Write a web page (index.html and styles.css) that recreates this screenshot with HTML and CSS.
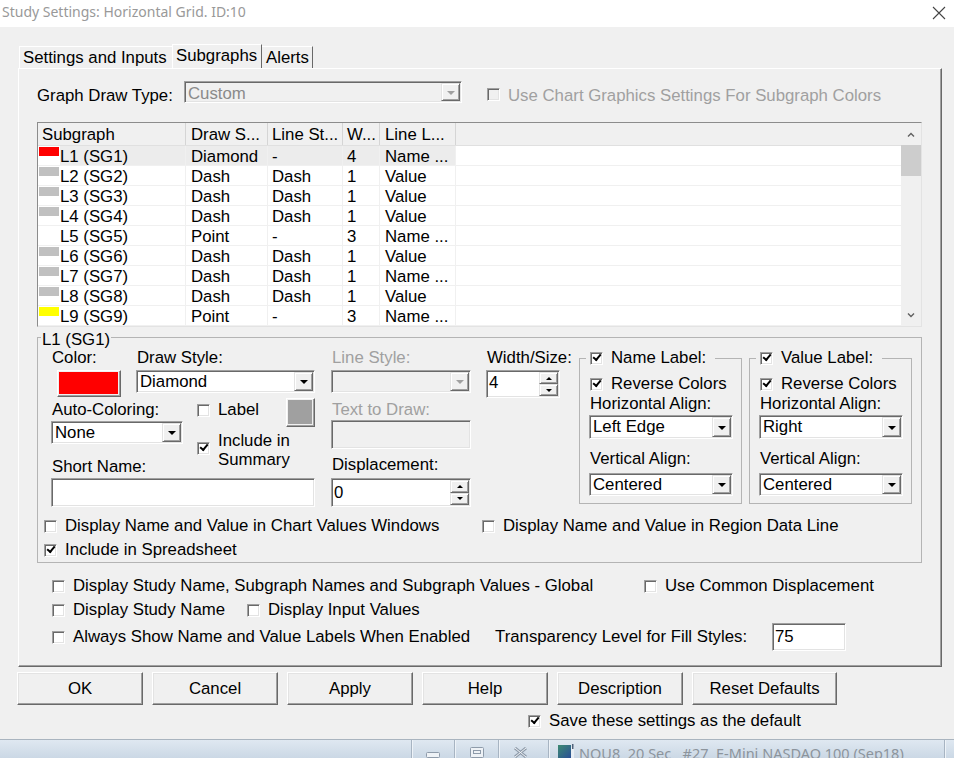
FILE: index.html
```html
<!DOCTYPE html>
<html lang="en">
<head>
  <meta charset="UTF-8">
  <title>Study Settings: Horizontal Grid. ID:10</title>
  <link rel="stylesheet" href="styles.css">
</head>
<body>
  <div class="titlebar">
    <span class="title">Study Settings: Horizontal Grid. ID:10</span>
    <svg class="close-x" width="14" height="14" viewBox="0 0 14 14"><path d="M1 1L13 13M13 1L1 13" stroke="#444" stroke-width="1.1" fill="none"/></svg>
  </div>

  <div class="dialog">
    <div class="tabs">
      <div class="tab tab-first">Settings and Inputs</div>
      <div class="tab tab-active">Subgraphs</div>
      <div class="tab tab-last">Alerts</div>
    </div>

    <div class="panel">
      <div class="draw-type">
        <span class="draw-type-label">Graph Draw Type:</span>
        <div class="combo combo-dis draw-type-combo"><span class="combo-val">Custom</span><span class="combo-btn"></span></div>
        <span class="chk chk-dis chart-colors-chk"></span>
        <span class="opt-text dis-text chart-colors-text">Use Chart Graphics Settings For Subgraph Colors</span>
      </div>

      <div class="list">
        <div class="list-main">
          <div class="list-head">
            <div class="c c1 h1">Subgraph</div>
            <div class="c c2">Draw S...</div>
            <div class="c c3">Line St...</div>
            <div class="c c4">W...</div>
            <div class="c c5">Line L...</div>
            <div class="c-fill"></div>
          </div>
          <div class="list-row sel">
            <div class="c c1"><span class="sw sw-red"></span><span class="nm">L1 (SG1)</span></div>
            <div class="c c2">Diamond</div><div class="c c3">-</div><div class="c c4">4</div><div class="c c5">Name ...</div><div class="c-fill"></div>
          </div>
          <div class="list-row">
            <div class="c c1"><span class="sw sw-grey"></span><span class="nm">L2 (SG2)</span></div>
            <div class="c c2">Dash</div><div class="c c3">Dash</div><div class="c c4">1</div><div class="c c5">Value</div><div class="c-fill"></div>
          </div>
          <div class="list-row">
            <div class="c c1"><span class="sw sw-grey"></span><span class="nm">L3 (SG3)</span></div>
            <div class="c c2">Dash</div><div class="c c3">Dash</div><div class="c c4">1</div><div class="c c5">Value</div><div class="c-fill"></div>
          </div>
          <div class="list-row">
            <div class="c c1"><span class="sw sw-grey"></span><span class="nm">L4 (SG4)</span></div>
            <div class="c c2">Dash</div><div class="c c3">Dash</div><div class="c c4">1</div><div class="c c5">Value</div><div class="c-fill"></div>
          </div>
          <div class="list-row">
            <div class="c c1"><span class="sw"></span><span class="nm">L5 (SG5)</span></div>
            <div class="c c2">Point</div><div class="c c3">-</div><div class="c c4">3</div><div class="c c5">Name ...</div><div class="c-fill"></div>
          </div>
          <div class="list-row">
            <div class="c c1"><span class="sw sw-grey"></span><span class="nm">L6 (SG6)</span></div>
            <div class="c c2">Dash</div><div class="c c3">Dash</div><div class="c c4">1</div><div class="c c5">Value</div><div class="c-fill"></div>
          </div>
          <div class="list-row">
            <div class="c c1"><span class="sw sw-grey"></span><span class="nm">L7 (SG7)</span></div>
            <div class="c c2">Dash</div><div class="c c3">Dash</div><div class="c c4">1</div><div class="c c5">Name ...</div><div class="c-fill"></div>
          </div>
          <div class="list-row">
            <div class="c c1"><span class="sw sw-grey"></span><span class="nm">L8 (SG8)</span></div>
            <div class="c c2">Dash</div><div class="c c3">Dash</div><div class="c c4">1</div><div class="c c5">Value</div><div class="c-fill"></div>
          </div>
          <div class="list-row">
            <div class="c c1"><span class="sw sw-yellow"></span><span class="nm">L9 (SG9)</span></div>
            <div class="c c2">Point</div><div class="c c3">-</div><div class="c c4">3</div><div class="c c5">Name ...</div><div class="c-fill"></div>
          </div>
        </div>
        <div class="vscroll">
          <div class="sb-arrow"><svg width="8" height="5" viewBox="0 0 8 5"><path d="M1 4.5L4 1.5L7 4.5" fill="none" stroke="#606060" stroke-width="1.4"/></svg></div>
          <div class="sb-thumb"></div>
          <div class="sb-track"></div>
          <div class="sb-arrow"><svg width="8" height="5" viewBox="0 0 8 5"><path d="M1 0.5L4 3.5L7 0.5" fill="none" stroke="#606060" stroke-width="1.4"/></svg></div>
        </div>
      </div>

      <fieldset class="group sg-group">
        <legend class="sg-legend">L1 (SG1)</legend>
        <div class="sg-main">
          <div class="col-l">
            <div class="row-a">
              <div class="color-block">
                <div class="lbl">Color:</div>
                <div class="swatch-btn color-btn"><span class="swatch-face face-red"></span></div>
              </div>
              <div class="ds-block">
                <div class="lbl">Draw Style:</div>
                <div class="combo ds-combo"><span class="combo-val">Diamond</span><span class="combo-btn"></span></div>
              </div>
            </div>
            <div class="row-b">
              <div class="ac-col">
                <div class="lbl ac-label">Auto-Coloring:</div>
                <div class="combo ac-combo"><span class="combo-val">None</span><span class="combo-btn"></span></div>
                <div class="lbl short-label">Short Name:</div>
              </div>
              <div class="lbl-col">
                <div class="label-row">
                  <span class="chk label-chk"></span>
                  <span class="opt-text label-text">Label</span>
                  <span class="swatch-btn grey-btn"><span class="swatch-face face-grey"></span></span>
                </div>
                <div class="inc-row">
                  <span class="chk on inc-chk"></span>
                  <span class="opt-text two-line">Include in<br>Summary</span>
                </div>
              </div>
            </div>
            <div class="edit short-edit"></div>
          </div>

          <div class="col-m">
            <div class="lbl dis-text">Line Style:</div>
            <div class="combo combo-dis ls-combo"><span class="combo-val"></span><span class="combo-btn"></span></div>
            <div class="lbl dis-text ttd-label">Text to Draw:</div>
            <div class="edit edit-dis ttd-edit"></div>
            <div class="lbl disp-label">Displacement:</div>
            <div class="spin disp-spin"><span class="spin-val">0</span><span class="spin-btns"><span class="spin-b spin-up"></span><span class="spin-b spin-dn"></span></span></div>
          </div>

          <div class="col-w">
            <div class="lbl">Width/Size:</div>
            <div class="spin w-spin"><span class="spin-val">4</span><span class="spin-btns"><span class="spin-b spin-up"></span><span class="spin-b spin-dn"></span></span></div>
          </div>

          <fieldset class="group lbl-group">
            <legend class="lbl-legend"><span class="opt"><span class="chk on"></span><span class="opt-text">Name Label:</span></span></legend>
            <div class="opt"><span class="chk on rc-chk"></span><span class="opt-text">Reverse Colors</span></div>
            <div class="lbl ha-label">Horizontal Align:</div>
            <div class="combo ha-combo"><span class="combo-val">Left Edge</span><span class="combo-btn"></span></div>
            <div class="lbl va-label">Vertical Align:</div>
            <div class="combo va-combo"><span class="combo-val">Centered</span><span class="combo-btn"></span></div>
          </fieldset>

          <fieldset class="group lbl-group val-group">
            <legend class="lbl-legend"><span class="opt"><span class="chk on"></span><span class="opt-text">Value Label:</span></span></legend>
            <div class="opt"><span class="chk on rc-chk"></span><span class="opt-text">Reverse Colors</span></div>
            <div class="lbl ha-label">Horizontal Align:</div>
            <div class="combo ha-combo"><span class="combo-val">Right</span><span class="combo-btn"></span></div>
            <div class="lbl va-label">Vertical Align:</div>
            <div class="combo va-combo"><span class="combo-val">Centered</span><span class="combo-btn"></span></div>
          </fieldset>
        </div>

        <div class="sg-checks">
          <div class="check-row">
            <div class="opt cv-opt"><span class="chk"></span><span class="opt-text">Display Name and Value in Chart Values Windows</span></div>
            <div class="opt"><span class="chk"></span><span class="opt-text">Display Name and Value in Region Data Line</span></div>
          </div>
          <div class="check-row second">
            <div class="opt"><span class="chk on"></span><span class="opt-text">Include in Spreadsheet</span></div>
          </div>
        </div>
      </fieldset>

      <div class="global">
        <div class="check-row">
          <div class="opt g1"><span class="chk"></span><span class="opt-text">Display Study Name, Subgraph Names and Subgraph Values - Global</span></div>
          <div class="opt"><span class="chk"></span><span class="opt-text">Use Common Displacement</span></div>
        </div>
        <div class="check-row second">
          <div class="opt g2"><span class="chk"></span><span class="opt-text">Display Study Name</span></div>
          <div class="opt"><span class="chk"></span><span class="opt-text">Display Input Values</span></div>
        </div>
        <div class="check-row third">
          <div class="opt g3"><span class="chk"></span><span class="opt-text">Always Show Name and Value Labels When Enabled</span></div>
          <span class="tr-label">Transparency Level for Fill Styles:</span>
          <div class="edit tr-edit">75</div>
        </div>
      </div>
    </div>

    <div class="buttons">
      <div class="btn">OK</div>
      <div class="btn">Cancel</div>
      <div class="btn">Apply</div>
      <div class="btn">Help</div>
      <div class="btn">Description</div>
      <div class="btn btn-wide">Reset Defaults</div>
    </div>

    <div class="save-row">
      <div class="opt"><span class="chk on"></span><span class="opt-text">Save these settings as the default</span></div>
    </div>
  </div>

  <div class="taskbar">
    <div class="tb-btn">
      <svg width="14" height="6" viewBox="0 0 14 6"><rect x="0.5" y="0.5" width="13" height="5" rx="1" fill="#eef2f6" stroke="#8e9baa"/></svg>
    </div>
    <div class="tb-btn">
      <svg width="14" height="11" viewBox="0 0 14 11"><rect x="0.5" y="0.5" width="13" height="10" rx="1" fill="#eef2f6" stroke="#8e9baa"/><rect x="3.5" y="3.5" width="7" height="3" fill="none" stroke="#8e9baa"/></svg>
    </div>
    <div class="tb-btn">
      <svg width="15" height="11" viewBox="0 0 15 11"><path d="M2 1L13 10M13 1L2 10" stroke="#8e9baa" stroke-width="3" fill="none"/><path d="M2 1L13 10M13 1L2 10" stroke="#f2f5f8" stroke-width="1" fill="none"/></svg>
    </div>
    <div class="tb-task">
      <svg class="tb-icon" width="17" height="14" viewBox="0 0 17 14"><defs><linearGradient id="ic" x1="0" y1="0" x2="1" y2="1"><stop offset="0" stop-color="#3c8a72"/><stop offset="1" stop-color="#2b4f96"/></linearGradient></defs><rect x="0" y="1" width="13" height="13" fill="url(#ic)"/><rect x="13" y="3" width="3" height="11" fill="#e8eef4"/><rect x="14" y="0" width="1.5" height="5" fill="#51627a"/></svg>
      <span class="tb-text">NQU8  20 Sec   #27  E-Mini NASDAQ 100 (Sep18)</span>
    </div>
    <div class="tb-end"></div>
  </div>
</body>
</html>
```

FILE: styles.css
```css
* {
  box-sizing: border-box;
}

body {
  margin: 0;
  width: 954px;
  height: 758px;
  overflow: hidden;
  background: #f0f0f0;
  font-family: "Liberation Sans", Arial, sans-serif;
  font-size: 16.8px;
  line-height: 18px;
  color: #000;
}

/* title bar */
.titlebar {
  height: 27px;
  background: #fff;
  display: flex;
  align-items: flex-start;
}

.title {
  font-family: "Noto Sans", sans-serif;
  font-size: 14px;
  line-height: 23px;
  color: #999;
  padding-left: 2px;
}

.close-x {
  margin: 6px 8px 0 auto;
}

.dialog {
  height: 712px;
  padding-top: 17px;
}

/* tabs */
.tabs {
  display: flex;
  align-items: flex-end;
  height: 24px;
  margin-left: 19px;
}

.tab {
  height: 22px;
  line-height: 21px;
  border-top: 1px solid #fff;
  white-space: nowrap;
}

.tab-first {
  width: 153px;
  border-left: 1px solid #fff;
  padding-left: 3px;
}

.tab-active {
  width: 90px;
  height: 24px;
  line-height: 22px;
  border-left: 1px solid #fff;
  border-right: 1px solid #696969;
  padding-left: 3px;
}

.tab-last {
  width: 51px;
  border-right: 1px solid #696969;
  padding-left: 4px;
}

.panel {
  width: 924px;
  height: 599px;
  margin-left: 18px;
  border: 1px solid;
  border-color: #fff #696969 #696969 #fff;
  box-shadow: inset -1px -1px 0 #a0a0a0;
}

/* shared controls */
.lbl {
  padding-left: 1px;
  white-space: nowrap;
}

.dis-text {
  color: #a0a0a0;
}

.opt {
  display: flex;
  align-items: center;
  white-space: nowrap;
}

.opt-text {
  margin-left: 8px;
  white-space: nowrap;
}

.chk {
  position: relative;
  flex: none;
  display: inline-block;
  width: 13px;
  height: 13px;
  background: #fff;
  border: 1px solid;
  border-color: #a0a0a0 #fff #fff #a0a0a0;
  box-shadow: inset 1px 1px 0 #696969, inset -1px -1px 0 #e3e3e3;
}

.chk.on::after {
  content: "";
  position: absolute;
  left: 2px;
  top: 1px;
  width: 6px;
  height: 3px;
  border-left: 2px solid #000;
  border-bottom: 2px solid #000;
  transform: rotate(-50deg);
}

.chk-dis {
  background: #f0f0f0;
}

.combo,
.edit,
.spin {
  border: 1px solid;
  border-color: #a0a0a0 #fff #fff #a0a0a0;
  box-shadow: inset 1px 1px 0 #696969, inset -1px -1px 0 #e3e3e3;
  background: #fff;
}

.combo {
  display: flex;
  align-items: stretch;
  padding: 1px;
}

.combo-val {
  flex: 1;
  padding-left: 2px;
  display: flex;
  align-items: center;
  white-space: nowrap;
}

.combo-btn {
  width: 19px;
  flex: none;
  display: flex;
  align-items: center;
  justify-content: center;
  background: #f0f0f0;
  border: 1px solid;
  border-color: #e3e3e3 #696969 #696969 #e3e3e3;
  box-shadow: inset 1px 1px 0 #fff, inset -1px -1px 0 #a0a0a0;
}

.combo-btn::after {
  content: "";
  border-left: 4px solid transparent;
  border-right: 4px solid transparent;
  border-top: 4px solid #000;
  margin-top: 1px;
}

.combo-dis {
  background: #f0f0f0;
}

.combo-dis .combo-val {
  color: #8a8a8a;
}

.combo-dis .combo-btn::after {
  border-top-color: #a0a0a0;
}

.edit-dis {
  background: #f0f0f0;
}

.spin {
  display: flex;
  padding: 1px;
}

.spin-val {
  flex: 1;
  display: flex;
  align-items: center;
  padding-left: 1px;
}

.spin-btns {
  width: 19px;
  display: flex;
  flex-direction: column;
}

.spin-b {
  flex: 1;
  display: flex;
  align-items: center;
  justify-content: center;
  background: #f0f0f0;
  border: 1px solid;
  border-color: #e3e3e3 #696969 #696969 #e3e3e3;
  box-shadow: inset 1px 1px 0 #fff, inset -1px -1px 0 #a0a0a0;
}

.spin-up::after {
  content: "";
  border-left: 3px solid transparent;
  border-right: 3px solid transparent;
  border-bottom: 3px solid #000;
}

.spin-dn::after {
  content: "";
  border-left: 3px solid transparent;
  border-right: 3px solid transparent;
  border-top: 3px solid #000;
}

.swatch-btn {
  display: flex;
  border: 1px solid;
  border-color: #fff #696969 #696969 #fff;
  box-shadow: inset -1px -1px 0 #a0a0a0;
  padding: 1px 2px 2px 1px;
  background: #f0f0f0;
}

.swatch-face {
  flex: 1;
}

.face-red {
  background: #ff0000;
}

.face-grey {
  background: #a0a0a0;
}

/* graph draw type row */
.draw-type {
  display: flex;
  align-items: flex-start;
  height: 22px;
  margin-top: 12px;
  padding-left: 18px;
}

.draw-type-label {
  width: 147px;
  margin-top: 6px;
}

.draw-type-combo {
  width: 278px;
  height: 22px;
}

.draw-type-combo .combo-val {
  padding-top: 3px;
}

.chart-colors-chk {
  margin: 7px 0 0 25px;
}

.chart-colors-text {
  margin-top: 6px;
}

/* subgraph list */
.list {
  display: flex;
  width: 885px;
  height: 205px;
  margin: 19px 0 0 18px;
  border: 1px solid;
  border-color: #8c8c8c #e3e3e3 #e3e3e3 #8c8c8c;
  background: #fff;
}

.list-main {
  width: 863px;
}

.list-head {
  display: flex;
  height: 23px;
  background: #f0f0f0;
  border-bottom: 1px solid #e0e0e0;
}

.list-head .c {
  padding-top: 1px;
  line-height: 21px;
  border-right: 1px solid #d5d5d5;
}

.list-row {
  display: flex;
  height: 20px;
  border-bottom: 1px solid #f0f0f0;
}

.list-row .c {
  padding-top: 3px;
  line-height: 16px;
}

.c {
  flex: none;
  white-space: nowrap;
  border-right: 1px solid #f0f0f0;
}

.c1 {
  width: 148px;
  display: flex;
}

.list-row .c1 {
  padding-top: 0;
}

.h1 {
  padding-left: 4px;
}

.c2 {
  width: 82px;
  padding-left: 5px;
}

.c3 {
  width: 75px;
  padding-left: 4px;
}

.c4 {
  width: 37px;
  padding-left: 4px;
}

.c5 {
  width: 76px;
  padding-left: 5px;
}

.c-fill {
  flex: 1;
}

.sw {
  flex: none;
  width: 20px;
  height: 9px;
  margin: 1px 1px 0 1px;
}

.sw-red {
  background: #ff0000;
}

.sw-grey {
  background: #c0c0c0;
}

.sw-yellow {
  background: #ffff00;
}

.nm {
  flex: 1;
  padding-top: 3px;
  line-height: 16px;
}

.sel .nm,
.sel .c2,
.sel .c3,
.sel .c4,
.sel .c5 {
  background: #ececec;
}

.vscroll {
  width: 20px;
  display: flex;
  flex-direction: column;
  background: #f0f0f0;
}

.sb-arrow {
  height: 22px;
  display: flex;
  align-items: center;
  justify-content: center;
}

.sb-thumb {
  height: 31px;
  background: #cdcdcd;
}

.sb-track {
  flex: 1;
}

/* group boxes */
.group {
  margin: 0;
  min-width: 0;
  border: 1px solid #b4b4b4;
}

.sg-group {
  width: 885px;
  height: 236px;
  margin-left: 18px;
  padding: 2px 0 0 6px;
}

.sg-legend {
  line-height: 14px;
  padding: 6px 1px 0;
  margin-left: -3px;
}

.sg-main {
  display: flex;
  align-items: flex-start;
  margin-left: 7px;
}

.col-l {
  width: 264px;
  flex: none;
}

.row-a {
  display: flex;
}

.color-block {
  width: 85px;
}

.color-btn {
  width: 64px;
  height: 27px;
  margin: 3px 0 0 6px;
}

.ds-block {
  width: 179px;
}

.ds-combo {
  width: 179px;
  height: 23px;
  margin-top: 3px;
}

.row-b {
  display: flex;
  height: 79px;
}

.ac-col {
  width: 146px;
}

.ac-label {
  margin-top: 4px;
}

.ac-combo {
  width: 132px;
  height: 23px;
  margin-top: 2px;
}

.short-label {
  margin-top: 14px;
}

.lbl-col {
  width: 118px;
}

.label-row {
  display: flex;
  align-items: flex-start;
  height: 29px;
  margin-top: 1px;
}

.label-chk {
  margin-top: 6px;
}

.label-text {
  margin-top: 3px;
}

.grey-btn {
  width: 29px;
  height: 29px;
  margin-left: auto;
}

.inc-row {
  display: flex;
  align-items: flex-start;
  margin-top: 4px;
}

.inc-chk {
  margin-top: 11px;
}

.two-line {
  line-height: 19px;
}

.short-edit {
  width: 264px;
  height: 29px;
  margin-top: 2px;
}

.col-m {
  width: 140px;
  flex: none;
  margin-left: 16px;
}

.ls-combo {
  width: 140px;
  height: 23px;
  margin-top: 3px;
}

.ttd-label {
  margin-top: 8px;
}

.ttd-edit {
  width: 140px;
  height: 29px;
  margin-top: 1px;
}

.disp-label {
  margin-top: 7px;
}

.disp-spin {
  width: 140px;
  height: 29px;
  margin-top: 4px;
}

.col-w {
  width: 93px;
  flex: none;
  margin-left: 15px;
}

.w-spin {
  width: 74px;
  height: 28px;
  margin-top: 3px;
}

.w-spin .spin-val {
  align-items: flex-start;
  padding-top: 2px;
}

.lbl-group {
  width: 163px;
  height: 155px;
  flex: none;
  padding: 8px 0 0 9px;
}

.val-group {
  margin-left: 7px;
}

.lbl-legend {
  line-height: 18px;
  padding: 0 9px 0 4px;
  margin-left: -3px;
}

.rc-chk {
  margin-left: 1px;
}

.ha-label {
  margin-top: 2px;
}

.ha-combo {
  width: 144px;
  height: 24px;
  margin-top: 2px;
}

.va-label {
  margin-top: 11px;
}

.va-combo {
  width: 144px;
  height: 23px;
  margin-top: 5px;
}

.sg-checks {
  margin-top: 10px;
}

.check-row {
  display: flex;
  align-items: center;
  height: 18px;
}

.check-row.second {
  margin-top: 6px;
}

.cv-opt {
  width: 438px;
}

/* global options */
.global {
  margin-top: 14px;
  padding-left: 33px;
}

.g1 {
  width: 592px;
}

.g2 {
  width: 195px;
}

.check-row.third {
  height: 28px;
  margin-top: 4px;
}

.g3 {
  width: 443px;
}

.tr-label {
  width: 277px;
  white-space: nowrap;
}

.tr-edit {
  width: 74px;
  height: 28px;
  padding: 4px 0 0 2px;
}

/* bottom buttons */
.buttons {
  display: flex;
  gap: 9px;
  margin: 5px 0 0 17px;
}

.btn {
  width: 126px;
  height: 33px;
  display: flex;
  align-items: center;
  justify-content: center;
  border: 1px solid;
  border-color: #fff #696969 #696969 #fff;
  box-shadow: inset -1px -1px 0 #a0a0a0, inset 1px 1px 0 #e3e3e3;
}

.btn-wide {
  width: 145px;
}

.save-row {
  margin-top: 7px;
  padding-left: 528px;
}

/* taskbar strip */
.taskbar {
  display: flex;
  height: 19px;
  padding-left: 411px;
  border-top: 1px solid #a9b4bf;
  background: linear-gradient(#dfe8f1, #cbd8e5);
  overflow: hidden;
}

.tb-btn {
  width: 43px;
  display: flex;
  align-items: flex-end;
  justify-content: center;
  border-left: 1px solid #a7b4c2;
  box-shadow: inset 1px 0 0 #eef3f8;
}

.tb-btn + .tb-btn {
  width: 44px;
}

.tb-task {
  width: 396px;
  display: flex;
  align-items: flex-start;
  margin-left: 6px;
  padding: 4px 0 0 9px;
  border-left: 1px solid #a7b4c2;
  box-shadow: inset 1px 0 0 #eef3f8;
}

.tb-icon {
  flex: none;
}

.tb-text {
  margin-left: 4px;
  margin-top: -1px;
  font-family: "Noto Sans", sans-serif;
  font-size: 14.5px;
  line-height: 20px;
  color: #8c949c;
  white-space: pre;
}

.tb-end {
  width: 10px;
  border-left: 1px solid #a7b4c2;
  box-shadow: inset 1px 0 0 #eef3f8;
}
```
